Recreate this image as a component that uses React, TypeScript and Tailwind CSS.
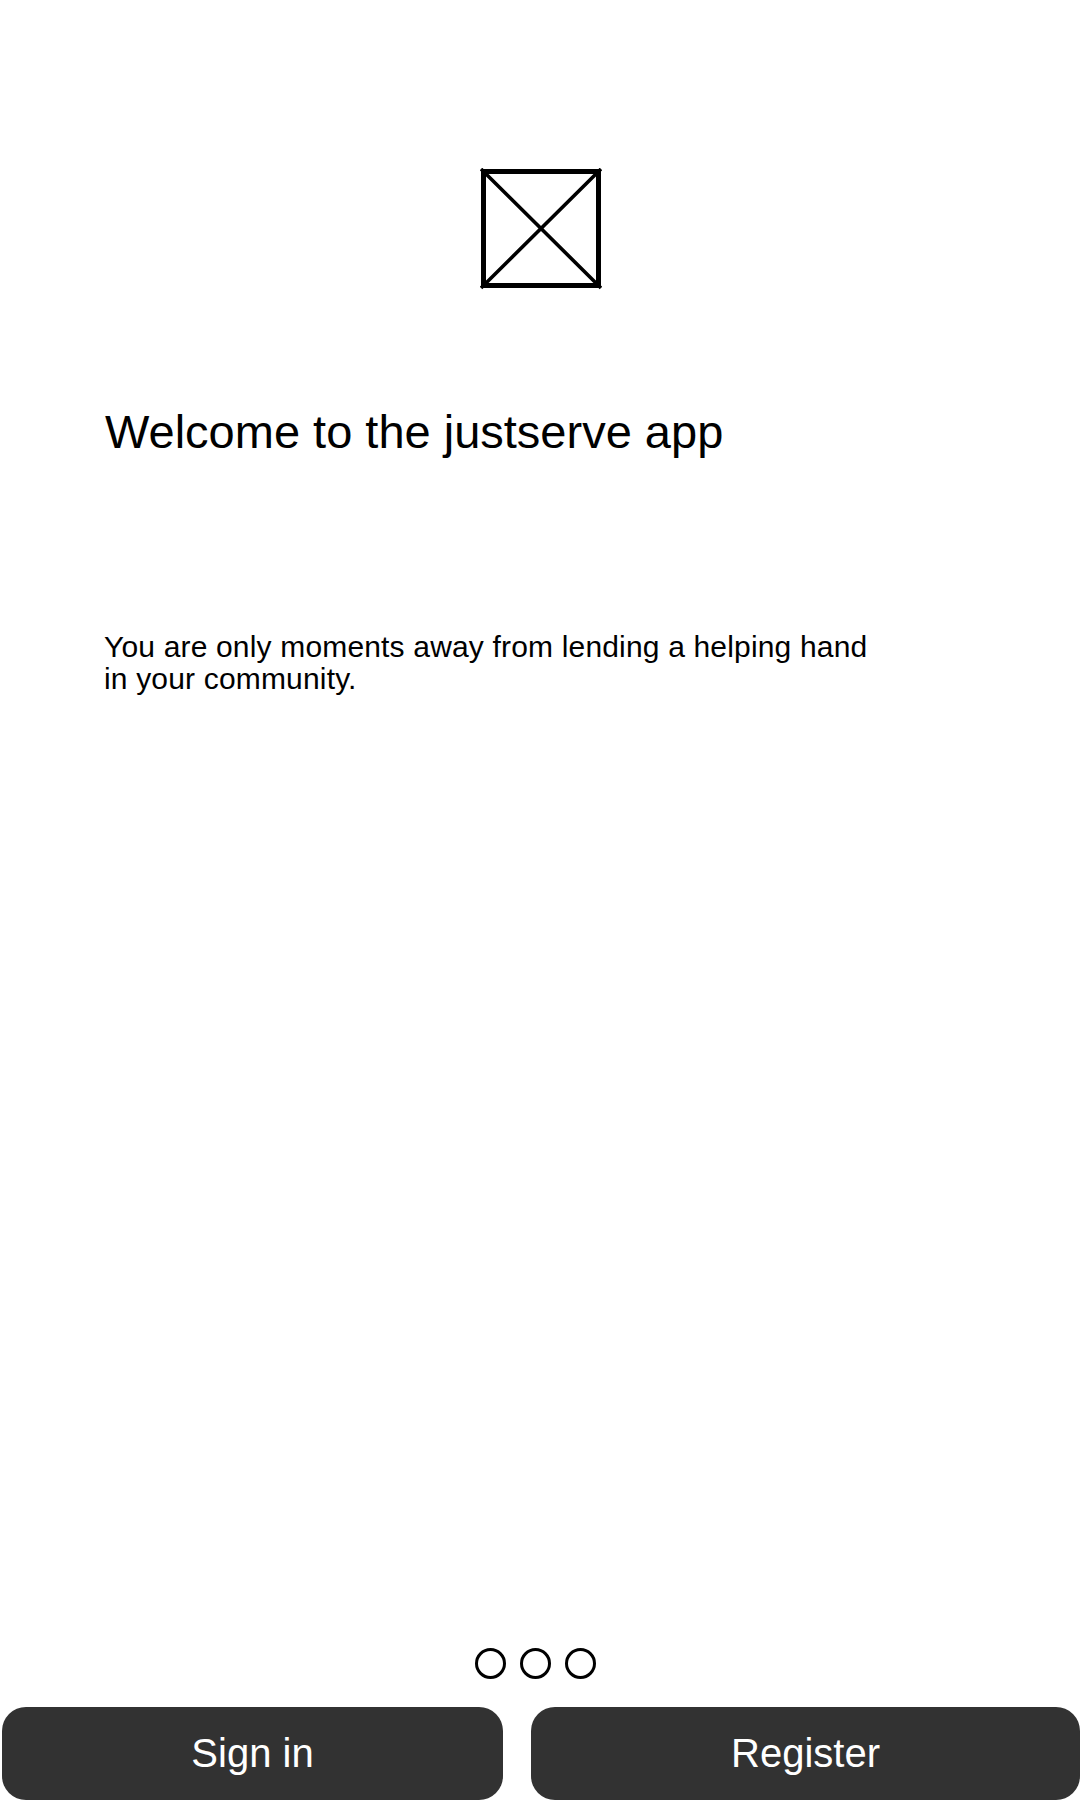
export default function App() {
  return (
    <main className="flex h-[1800px] w-[1080px] flex-col overflow-hidden bg-white font-['Liberation_Sans',Arial,sans-serif] text-black">
      <svg className="mt-[168px] ml-[480px] h-[122px] w-[122px] shrink-0" viewBox="0 0 122 122" fill="none" stroke="#000">
        <rect x="3.5" y="3.5" width="115" height="114" strokeWidth="5" />
        <path d="M1 1 121 120M121 1 1 120" strokeWidth="3.6" />
      </svg>
      <h1 className="mt-[116px] ml-[105px] text-[47px] leading-[52px] whitespace-nowrap">Welcome to the justserve app</h1>
      <p className="mt-[173px] ml-[104px] text-[30px] leading-[32px] tracking-[0.17px] whitespace-nowrap">
        You are only moments away from lending a helping hand
        <br />
        in your community.
      </p>
      <div className="mt-auto mb-[28px] ml-[475px] flex gap-[14px]">
        <span className="size-[31px] rounded-full border-[3px] border-black" />
        <span className="size-[31px] rounded-full border-[3px] border-black" />
        <span className="size-[31px] rounded-full border-[3px] border-black" />
      </div>
      <div className="ml-[2px] flex shrink-0 gap-[28px] text-[40px] leading-[46px] text-white">
        <button className="h-[93px] w-[501px] rounded-[24px] bg-[#323232] pb-[2px]">Sign in</button>
        <button className="h-[93px] w-[549px] rounded-[24px] bg-[#323232] pb-[2px]">Register</button>
      </div>
    </main>
  );
}
